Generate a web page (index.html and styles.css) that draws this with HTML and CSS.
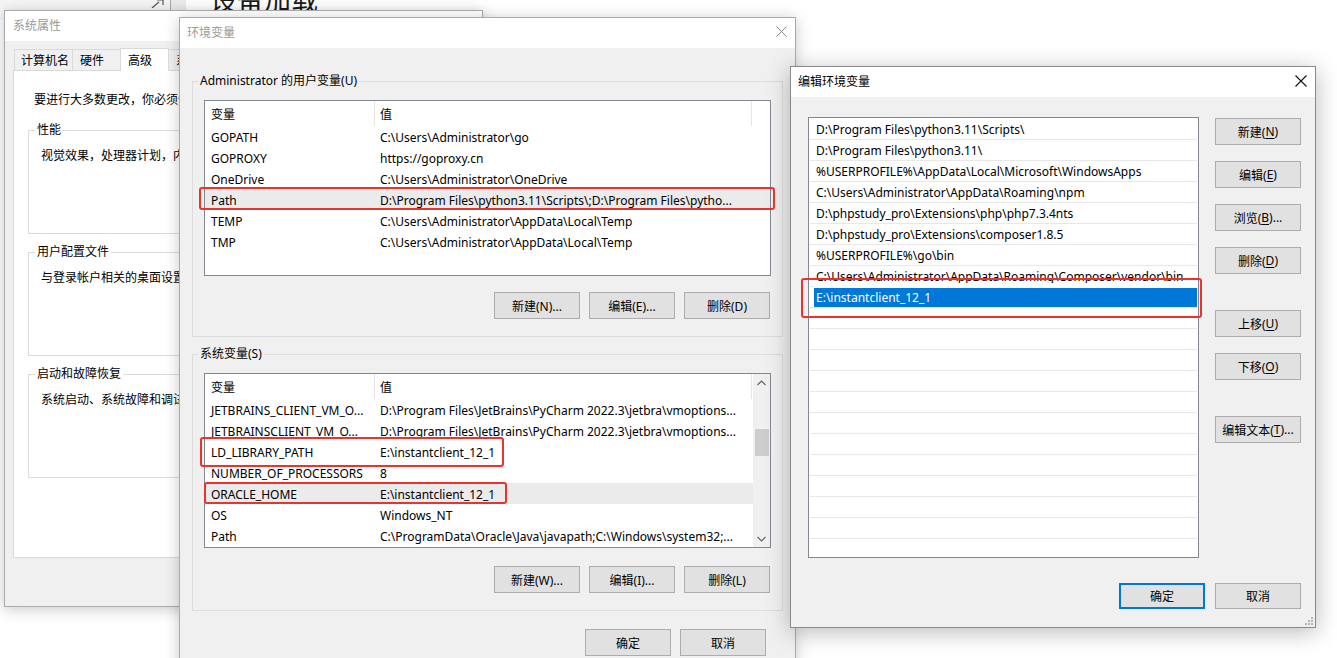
FILE: index.html
```html
<!DOCTYPE html>
<html lang="zh-CN">
<head>
  <meta charset="UTF-8" />
  <title>环境变量</title>
  <link rel="stylesheet" href="styles.css">
</head>
<body>
  <div class="desk">
    <div class="desk-side">
      <svg class="pin" width="14" height="8" viewBox="0 0 14 8"><path d="M2 8L9 2M7 0h6v5" fill="none" stroke="#555" stroke-width="1.2"/></svg>
    </div>
    <div class="desk-strip"></div>
    <div class="desk-heading">设备加载</div>
  </div>

  <section class="win win-sys">
    <header class="win-title">系统属性</header>
    <div class="sys-body">
      <div class="tabs">
        <span class="tab">计算机名</span>
        <span class="tab">硬件</span>
        <span class="tab on">高级</span>
        <span class="tab">系统保护</span>
        <span class="tab">远程</span>
      </div>
      <div class="tab-panel">
        <p class="note">要进行大多数更改，你必须作为管理员登录。</p>
        <fieldset class="group sys-group">
          <legend>性能</legend>
          <p>视觉效果，处理器计划，内存使用，以及虚拟内存</p>
        </fieldset>
        <fieldset class="group sys-group">
          <legend>用户配置文件</legend>
          <p>与登录帐户相关的桌面设置</p>
        </fieldset>
        <fieldset class="group sys-group">
          <legend>启动和故障恢复</legend>
          <p>系统启动、系统故障和调试信息</p>
        </fieldset>
      </div>
    </div>
  </section>

  <section class="win win-env">
    <header class="win-title">环境变量
      <svg class="close" width="11" height="11" viewBox="0 0 11 11"><path d="M0.5 0.5L10.5 10.5M10.5 0.5L0.5 10.5" stroke="currentColor" stroke-width="1"/></svg>
    </header>
    <div class="env-body">
      <fieldset class="group env-group">
        <legend>Administrator 的用户变量(U)</legend>
        <div class="listview user-list">
          <div class="lv-main">
            <div class="lv-head"><span class="c1">变量</span><span class="c2">值</span></div>
            <div class="lv-row"><span class="c1">GOPATH</span><span class="c2">C:\Users\Administrator\go</span></div>
            <div class="lv-row"><span class="c1">GOPROXY</span><span class="c2">https://goproxy.cn</span></div>
            <div class="lv-row"><span class="c1">OneDrive</span><span class="c2">C:\Users\Administrator\OneDrive</span></div>
            <div class="lv-row hot"><span class="c1">Path</span><span class="c2">D:\Program Files\python3.11\Scripts\;D:\Program Files\pytho...</span></div>
            <div class="lv-row"><span class="c1">TEMP</span><span class="c2">C:\Users\Administrator\AppData\Local\Temp</span></div>
            <div class="lv-row"><span class="c1">TMP</span><span class="c2">C:\Users\Administrator\AppData\Local\Temp</span></div>
          </div>
        </div>
        <div class="btn-row">
          <button class="btn">新建(N)...</button>
          <button class="btn">编辑(E)...</button>
          <button class="btn">删除(D)</button>
        </div>
      </fieldset>

      <fieldset class="group env-group sys-vars">
        <legend>系统变量(S)</legend>
        <div class="listview sys-list">
          <div class="lv-main">
            <div class="lv-head"><span class="c1">变量</span><span class="c2">值</span></div>
            <div class="lv-row"><span class="c1">JETBRAINS_CLIENT_VM_O...</span><span class="c2">D:\Program Files\JetBrains\PyCharm 2022.3\jetbra\vmoptions...</span></div>
            <div class="lv-row"><span class="c1">JETBRAINSCLIENT_VM_O...</span><span class="c2">D:\Program Files\JetBrains\PyCharm 2022.3\jetbra\vmoptions...</span></div>
            <div class="lv-row"><span class="c1">LD_LIBRARY_PATH</span><span class="c2">E:\instantclient_12_1</span></div>
            <div class="lv-row"><span class="c1">NUMBER_OF_PROCESSORS</span><span class="c2">8</span></div>
            <div class="lv-row hot"><span class="c1">ORACLE_HOME</span><span class="c2">E:\instantclient_12_1</span></div>
            <div class="lv-row"><span class="c1">OS</span><span class="c2">Windows_NT</span></div>
            <div class="lv-row"><span class="c1">Path</span><span class="c2">C:\ProgramData\Oracle\Java\javapath;C:\Windows\system32;...</span></div>
          </div>
          <div class="vscroll">
            <div class="sb-arrow"><svg width="9" height="6" viewBox="0 0 9 6"><path d="M0.5 5L4.5 1L8.5 5" fill="none" stroke="#606060" stroke-width="1.1"/></svg></div>
            <div class="sb-track"><div class="sb-thumb"></div></div>
            <div class="sb-arrow"><svg width="9" height="6" viewBox="0 0 9 6"><path d="M0.5 1L4.5 5L8.5 1" fill="none" stroke="#606060" stroke-width="1.1"/></svg></div>
          </div>
        </div>
        <div class="btn-row">
          <button class="btn">新建(W)...</button>
          <button class="btn">编辑(I)...</button>
          <button class="btn">删除(L)</button>
        </div>
      </fieldset>

      <div class="dlg-actions env-actions">
        <button class="btn">确定</button>
        <button class="btn">取消</button>
      </div>
    </div>
  </section>

  <section class="win win-edit active">
    <header class="win-title">编辑环境变量
      <svg class="close" width="12" height="12" viewBox="0 0 12 12"><path d="M0.5 0.5L11.5 11.5M11.5 0.5L0.5 11.5" stroke="currentColor" stroke-width="1.1"/></svg>
    </header>
    <div class="edit-body">
      <div class="edit-main">
        <div class="pathlist">
          <div class="pl-row">D:\Program Files\python3.11\Scripts\</div>
          <div class="pl-row">D:\Program Files\python3.11\</div>
          <div class="pl-row">%USERPROFILE%\AppData\Local\Microsoft\WindowsApps</div>
          <div class="pl-row">C:\Users\Administrator\AppData\Roaming\npm</div>
          <div class="pl-row">D:\phpstudy_pro\Extensions\php\php7.3.4nts</div>
          <div class="pl-row">D:\phpstudy_pro\Extensions\composer1.8.5</div>
          <div class="pl-row">%USERPROFILE%\go\bin</div>
          <div class="pl-row">C:\Users\Administrator\AppData\Roaming\Composer\vendor\bin</div>
          <div class="pl-row editing"><div class="pl-edit"><span class="sel">E:\instantclient_12_1</span></div></div>
          <div class="pl-row"></div>
          <div class="pl-row"></div>
          <div class="pl-row"></div>
          <div class="pl-row"></div>
          <div class="pl-row"></div>
          <div class="pl-row"></div>
          <div class="pl-row"></div>
          <div class="pl-row"></div>
          <div class="pl-row"></div>
          <div class="pl-row"></div>
          <div class="pl-row"></div>
        </div>
        <div class="side-btns">
          <button class="btn">新建(<u>N</u>)</button>
          <button class="btn">编辑(<u>E</u>)</button>
          <button class="btn">浏览(<u>B</u>)...</button>
          <button class="btn">删除(<u>D</u>)</button>
          <button class="btn far">上移(<u>U</u>)</button>
          <button class="btn">下移(<u>O</u>)</button>
          <button class="btn far">编辑文本(<u>T</u>)...</button>
        </div>
      </div>
      <div class="dlg-actions edit-actions">
        <button class="btn default">确定</button>
        <button class="btn">取消</button>
      </div>
    </div>
    <svg class="grip" width="10" height="10" viewBox="0 0 10 10" fill="#b4b4b4">
      <rect x="8" y="2" width="2" height="2"/><rect x="5" y="5" width="2" height="2"/><rect x="8" y="5" width="2" height="2"/>
      <rect x="2" y="8" width="2" height="2"/><rect x="5" y="8" width="2" height="2"/><rect x="8" y="8" width="2" height="2"/>
    </svg>
  </section>

  <div class="mark mark-path"></div>
  <div class="mark mark-ld"></div>
  <div class="mark mark-oracle"></div>
  <div class="mark mark-edit"></div>
</body>
</html>
```

FILE: styles.css
```css
* { box-sizing: border-box; }
body {
  margin: 0;
  width: 1337px; height: 658px;
  overflow: hidden;
  position: relative;
  background: #fff;
  font-family: "Microsoft YaHei UI", "Segoe UI", "Noto Sans", "Noto Sans CJK SC", sans-serif;
  font-size: 12px;
  color: #000;
}
p { margin: 0; }
button { font: inherit; color: inherit; }

/* desktop behind the dialogs */
.desk-side {
  position: absolute;
  left: 0; top: 0;
  width: 171px; height: 20px;
  background: #f6f6f6;
  border-right: 1px solid #a8a8a8;
}
.pin { position: absolute; left: 150px; top: 0; }
.desk-strip {
  position: absolute;
  left: 171px; top: 0;
  width: 15px; height: 20px;
  background: #ececec;
}
.desk-heading {
  position: absolute;
  left: 210px; top: -21px;
  font-size: 27px;
  color: #1a1a1a;
  font-family: "Noto Sans CJK SC", sans-serif;
}

/* windows */
.win {
  position: absolute;
  display: flex;
  flex-direction: column;
  background: #f0f0f0;
  border: 1px solid #aaa;
  box-shadow: 0 2px 14px rgba(0,0,0,0.22);
}
.win-title {
  flex: none;
  height: 30px;
  display: flex;
  align-items: center;
  padding: 0 0 3px 7px;
  background: #fff;
  color: #9a9a9a;
}
.win-title .close { margin-left: auto; color: #8a8a8a; }
.win.active { border-color: #8a8a8a; box-shadow: 0 4px 22px rgba(0,0,0,0.28); }
.win.active .win-title { color: #000; }
.win.active .win-title .close { color: #111; }

/* 系统属性 */
.win-sys { left: 4px; top: 10px; width: 479px; height: 597px; }
.win-sys .win-title { padding-left: 8px; }
.sys-body { padding: 7px 8px 0 8px; }
.tabs {
  display: flex;
  align-items: flex-end;
  height: 22px;
  padding-left: 1px;
}
.tab {
  height: 21px;
  min-width: 49px;
  padding: 0 3px 0 7px;
  display: flex;
  align-items: center;
  background: #f0f0f0;
  border: 1px solid #d9d9d9;
  border-bottom: none;
  margin-right: -1px;
}
.tab:first-child { padding-left: 6px; }
.tab.on {
  height: 23px;
  background: #fff;
  position: relative;
  z-index: 1;
  margin-bottom: -1px;
}
.tab-panel {
  height: 488px;
  background: #fff;
  border: 1px solid #d9d9d9;
  padding: 21px 14px 0 14px;
}
.note { margin-left: 6px; line-height: 16px; }

.group {
  margin: 0;
  padding: 0;
  border: 1px solid #dcdcdc;
  min-width: 0;
}
.group legend {
  margin-left: 6px;
  padding: 0 2px;
  line-height: 16px;
}
.sys-group { height: 112px; margin-top: 14px; }
.sys-group + .sys-group { margin-top: 10px; }
.sys-group p { margin: 10px 0 0 12px; line-height: 16px; white-space: nowrap; }

/* 环境变量 */
.win-env { left: 179px; top: 17px; width: 617px; height: 662px; }
.win-env .close { margin-right: 8px; }
.env-body { padding: 25px 12px 0 12px; }
.env-group { padding-bottom: 17px; }
.env-group legend { margin-left: 5px; }
.env-group.sys-vars { margin-top: 9px; }

.listview {
  display: flex;
  margin: 11px 0 0 11px;
  width: 567px;
  background: #fff;
  border: 1px solid #828790;
  overflow: hidden;
}
.user-list { height: 176px; }
.sys-list { height: 175px; }
.lv-main { flex: 1; min-width: 0; }
.lv-head { display: flex; height: 25px; }
.lv-head span {
  display: flex;
  align-items: center;
  border-right: 1px solid #e5e5e5;
}
.lv-head .c1 { width: 170px; padding-left: 6px; }
.lv-head .c2 { width: 377px; padding-left: 5px; }
.lv-row {
  display: flex;
  align-items: center;
  height: 21px;
  padding-top: 1px;
  white-space: nowrap;
}
.lv-row .c1 { width: 170px; padding-left: 6px; overflow: hidden; }
.lv-row .c2 { flex: 1; min-width: 0; padding-left: 5px; overflow: hidden; }
.lv-row.hot { background: #ebebeb; }

.vscroll {
  flex: none;
  width: 17px;
  display: flex;
  flex-direction: column;
  background: #f0f0f0;
}
.sb-arrow {
  height: 17px;
  display: flex;
  align-items: center;
  justify-content: center;
}
.sb-track { flex: 1; padding-top: 38px; }
.sb-thumb {
  width: 14px; height: 27px;
  margin-left: 2px;
  background: #cdcdcd;
}

.btn {
  width: 86px; height: 27px;
  padding: 0;
  display: flex;
  align-items: center;
  justify-content: center;
  background: #e1e1e1;
  border: 1px solid #adadad;
  white-space: nowrap;
}
.btn u { text-underline-offset: 2px; }
.btn.default {
  border-color: #0078d7;
  box-shadow: inset 0 0 0 1px #0078d7;
}
.btn-row {
  display: flex;
  justify-content: flex-end;
  gap: 9px;
  margin-top: 16px;
  padding-right: 12px;
}
.sys-vars .btn-row { margin-top: 18px; }
.dlg-actions {
  display: flex;
  justify-content: flex-end;
  gap: 9px;
}
.env-actions { margin-top: 18px; padding-right: 17px; }

/* 编辑环境变量 */
.win-edit { left: 790px; top: 66px; width: 526px; height: 562px; }
.win-edit .close { margin-right: 8px; }
.edit-body { padding: 20px 14px 0 17px; }
.edit-main { display: flex; }
.pathlist {
  width: 391px; height: 441px;
  padding-top: 1px;
  background: #fff;
  border: 1px solid #828790;
  overflow: hidden;
}
.pl-row {
  height: 21px;
  margin: 0 1px;
  padding: 2px 0 0 6px;
  line-height: 18px;
  border-bottom: 1px solid #e8e8e8;
  white-space: nowrap;
  overflow: hidden;
}
.pl-row.editing { position: relative; overflow: visible; }
.pl-edit {
  position: absolute;
  left: 4px; right: 0; top: -4px;
  height: 24px;
  padding-top: 5px;
  background: #fff;
}
.pl-edit .sel {
  display: block;
  height: 19px;
  padding-left: 2px;
  line-height: 19px;
  background: #0078d7;
  color: #fff;
}
.side-btns {
  display: flex;
  flex-direction: column;
  gap: 16px;
  margin: 1px 0 0 16px;
}
.side-btns .far { margin-top: 20px; }
.edit-actions { margin-top: 25px; gap: 10px; }
.edit-actions .btn { height: 26px; }
.grip { position: absolute; right: 2px; bottom: 2px; }

/* red annotation boxes */
.mark {
  position: absolute;
  border: 2px solid #e8332f;
  border-radius: 3px;
}
.mark-path { left: 199px; top: 187px; width: 576px; height: 23px; }
.mark-ld { left: 200px; top: 437px; width: 304px; height: 30px; }
.mark-oracle { left: 204px; top: 482px; width: 303px; height: 22px; }
.mark-edit { left: 801px; top: 278px; width: 401px; height: 40px; }
```
